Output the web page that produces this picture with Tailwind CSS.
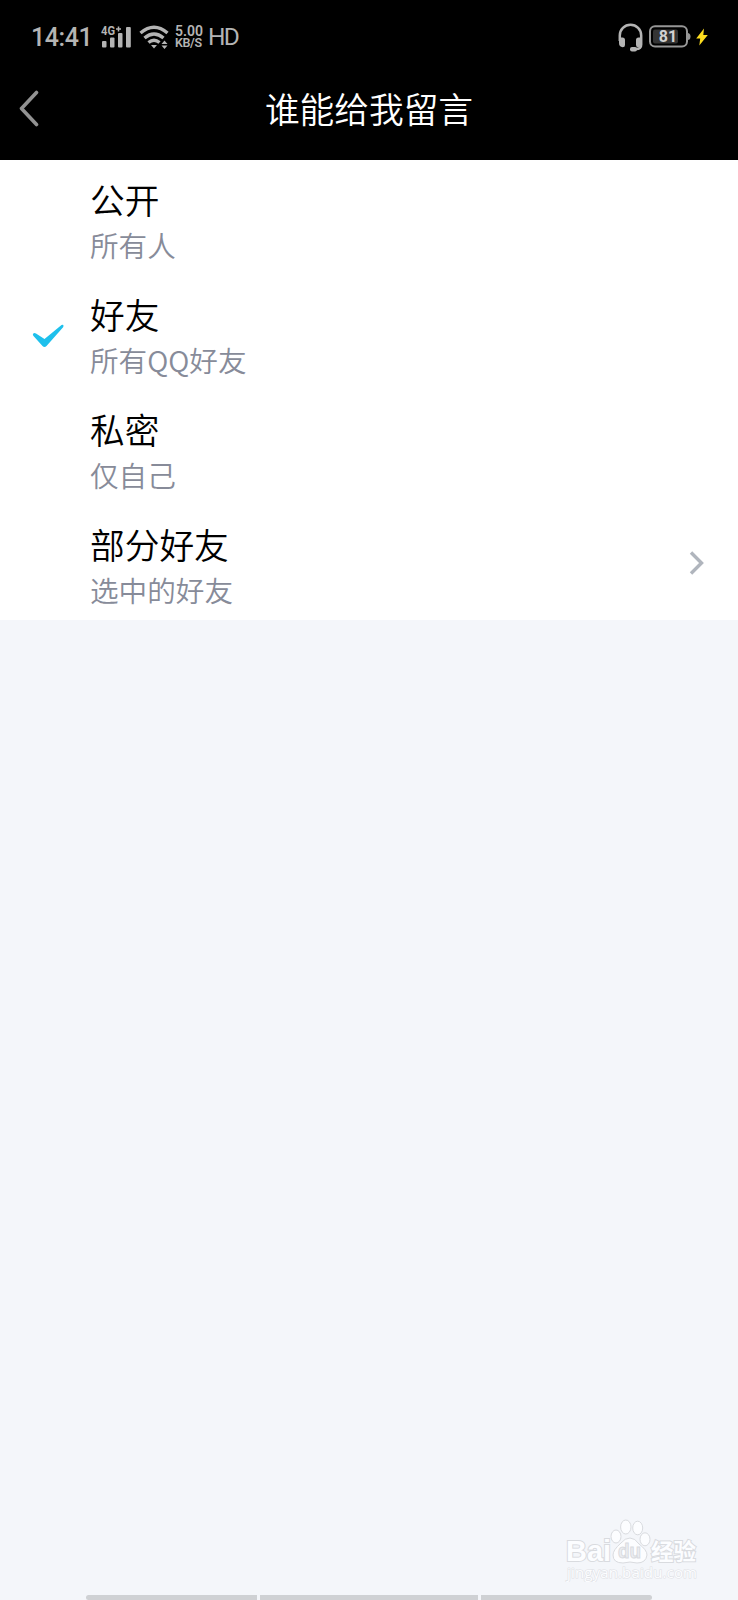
<!DOCTYPE html>
<html lang="zh-CN">

<head>
    <meta charset="UTF-8">
    <meta name="viewport" content="width=device-width, initial-scale=1.0">
    <title>谁能给我留言</title>
    <script src="https://cdn.jsdelivr.net/npm/@tailwindcss/browser@4"></script>
</head>

<body class="bg-[#f4f6fa] font-['Noto_Sans_CJK_SC',sans-serif]">
    <div class="flex flex-col h-[1600px] overflow-hidden">
        <header class="bg-black h-40 shrink-0">
            <!-- Status bar -->
            <div class="flex items-center justify-between h-[74px] pl-[31px] pr-[30px] font-[Roboto,sans-serif] text-[#b4b4b4]">
                <div class="flex items-center">
                    <span class="w-[70px] text-[25px] leading-[30px] tracking-[-0.4px] mt-[2px] font-medium">14:41</span>
                    <svg class="w-[31px] h-[24px]" viewBox="0 0 31 24" fill="currentColor">
                        <text x="0" y="9.5" font-size="12" font-weight="700" textLength="14" lengthAdjust="spacingAndGlyphs">4G</text>
                        <path d="M15 4h5M17.500 1.500v5" stroke="currentColor" stroke-width="1.500" />
                        <rect x="1" y="16" width="4.500" height="6.500" rx="1" />
                        <rect x="9" y="12.500" width="4.500" height="10" rx="1" />
                        <rect x="17" y="8" width="4.500" height="14.500" rx="1" />
                        <rect x="25" y="2" width="4.800" height="20.500" rx="1" />
                    </svg>
                    <svg class="w-[30px] h-[24px] ml-[7px]" viewBox="0 0 30 24" fill="none" stroke="currentColor" stroke-width="3.400">
                        <path d="M1.500 8Q15 -3.500 28.500 8" />
                        <path d="M5.500 13Q15 5 24.500 13" />
                        <path d="M9.500 17.500Q15 13 20.500 17.500" />
                        <path d="M12 20h6L15 23.500z" fill="currentColor" stroke="none" />
                        <path d="M22.500 19h6L25.500 15.500zM22.500 20.500h6L25.500 24z" fill="currentColor" stroke="none" />
                    </svg>
                    <div class="flex flex-col w-[28px] ml-[6px] font-semibold">
                        <span class="text-[14px] leading-[12px]">5.00</span>
                        <span class="text-[12.500px] leading-[12px] tracking-[-0.4px]">KB/S</span>
                    </div>
                    <span class="ml-[5px] text-[24.500px] leading-[30px] tracking-[-1.7px]">HD</span>
                </div>
                <div class="flex items-center">
                    <svg class="w-[25px] h-[29px]" viewBox="0 0 25 29" fill="none" stroke="currentColor" stroke-width="2.500">
                        <path d="M1.800 18V12.500a10.700 10.700 0 0 1 21.400 0V21.500q0 4.500-5 4.500h-4" />
                        <path d="M1 14.500h3.500q2.500 0 2.500 2.500v5q0 2.200-2.300 2.200Q1 24 1 20zM24 14.500h-3.500q-2.500 0-2.500 2.500v5q0 2.200 2.300 2.200Q24 24 24 20z" fill="currentColor" stroke="none" />
                        <rect x="12" y="24" width="7" height="4.500" rx="2" fill="currentColor" stroke="none" />
                    </svg>
                    <svg class="w-[42px] h-[23px] ml-[6px] mb-[1px]" viewBox="0 0 42 23" fill="none">
                        <rect x="1" y="1.200" width="37" height="20.300" rx="5" stroke="#969696" stroke-width="2" />
                        <rect x="4" y="4.500" width="25" height="14" rx="2" fill="#343434" />
                        <path d="M38.500 8q3 0 3 3.500t-3 3.500z" fill="#969696" />
                        <text x="19" y="17" text-anchor="middle" font-size="16" font-weight="700" fill="#d2d2d2">81</text>
                    </svg>
                    <svg class="w-[12px] h-[18px] ml-[5px]" viewBox="0 0 12 18" fill="#fcdc1e">
                        <path d="M8 0.500L0.200 10.500h4L3.300 17.500L11.800 7h-4.500z" />
                    </svg>
                </div>
            </div>

            <!-- Title bar -->
            <div class="grid grid-cols-[100px_1fr_100px] items-center h-[70px]">
                <svg class="w-[22px] h-[38px] ml-[18px]" viewBox="0 0 22 38" fill="none" stroke="#929292" stroke-width="3.600" stroke-linecap="round" stroke-linejoin="round">
                    <path d="M18.500 2.500L3.500 18.500L18.500 34.500" />
                </svg>
                <h1 class="pb-[2px] text-center text-white text-[34.700px] leading-[52px] font-[350]">谁能给我留言</h1>
            </div>
        </header>

        <!-- Permission options -->
        <ul class="bg-white shrink-0 text-[34.700px] leading-[52px] text-black font-[350]">
            <li class="grid grid-cols-[90px_1fr_51px] items-center h-[115px]">
                <div></div>
                <div class="pt-[3px]">
                    <p>公开</p>
                    <p class="text-[28.600px] leading-[40px] text-[#878b99]">所有人</p>
                </div>
            </li>
            <li class="grid grid-cols-[90px_1fr_51px] items-center h-[115px]">
                <svg class="w-[32px] h-[24px] ml-[32px] mt-[6px]" viewBox="0 0 32 24" fill="#1ec0ec">
                    <path d="M1 10Q2 8.500 4 9.500L12.500 15L29.500 1Q31.500 0 31.500 2Q31.500 3 30 4.500L14.500 22Q12.500 24 10.500 22L1.500 12Q.500 11 1 10z" />
                </svg>
                <div class="pt-[3px]">
                    <p>好友</p>
                    <p class="text-[28.600px] leading-[40px] text-[#878b99]">所有QQ好友</p>
                </div>
            </li>
            <li class="grid grid-cols-[90px_1fr_51px] items-center h-[115px]">
                <div></div>
                <div class="pt-[3px]">
                    <p>私密</p>
                    <p class="text-[28.600px] leading-[40px] text-[#878b99]">仅自己</p>
                </div>
            </li>
            <li class="grid grid-cols-[90px_1fr_51px] items-center h-[115px]">
                <div></div>
                <div class="pt-[3px]">
                    <p>部分好友</p>
                    <p class="text-[28.600px] leading-[40px] text-[#878b99]">选中的好友</p>
                </div>
                <svg class="w-[16px] h-[26px] ml-[1px]" viewBox="0 0 16 26" fill="none" stroke="#b0b5bd" stroke-width="3.400">
                    <path d="M3 2.500L13.500 13L3 23.500" />
                </svg>
            </li>
        </ul>

        <footer class="mt-auto">
            <!-- Watermark -->
            <svg class="w-[140px] h-[66px] ml-[562px]" viewBox="0 -2 140 66" fill="#fcfdff" stroke="#d9dbdf" stroke-width="1" font-family="Liberation Sans, Noto Sans CJK SC, sans-serif">
                <ellipse cx="54" cy="18.500" rx="5" ry="6.500" />
                <ellipse cx="63.800" cy="9" rx="5.200" ry="7" />
                <ellipse cx="75.700" cy="10" rx="5" ry="6.800" />
                <ellipse cx="83" cy="21.300" rx="5" ry="6.500" />
                <path d="M68 20Q73 20 77 26Q85 32 85 37Q84 45 75 45Q68 43 61 45Q51 45 51 37Q51 32 59 25Q63 20 68 20z" />
                <text x="4" y="42.5" font-size="29" font-weight="700" textLength="45" lengthAdjust="spacingAndGlyphs" paint-order="stroke" stroke-width="2">Bai</text>
                <text x="56" y="40" font-size="20" font-weight="700" textLength="23" lengthAdjust="spacingAndGlyphs" fill="#eceef2">du</text>
                <text x="89" y="41.500" font-size="23" font-weight="700" font-family="Noto Sans CJK SC" textLength="45" lengthAdjust="spacingAndGlyphs" paint-order="stroke" stroke-width="2">经验</text>
                <text x="5" y="59.5" font-size="15" font-family="Open Sans" textLength="130" lengthAdjust="spacing" paint-order="stroke" stroke="#dfe1e5" stroke-width="1.200">jingyan.baidu.com</text>
            </svg>
            <!-- Gesture bar -->
            <div class="flex gap-[3px] h-[5px] mt-[13px] pl-[86px]">
                <div class="w-[171px] rounded-l-full bg-[#cfd1d4]"></div>
                <div class="w-[218px] bg-[#cfd1d4]"></div>
                <div class="w-[171px] rounded-r-full bg-[#cfd1d4]"></div>
            </div>
        </footer>
    </div>
</body>

</html>
